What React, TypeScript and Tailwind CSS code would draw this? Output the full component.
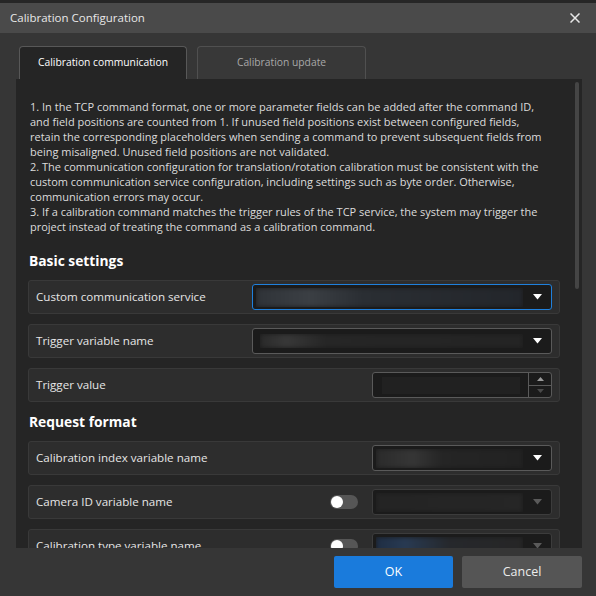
import React from "react";

const font = { fontFamily: '"Open Sans", "Noto Sans", sans-serif' };

function Caret({ dim }: { dim?: boolean }) {
  return (
    <svg width="9" height="6" viewBox="0 0 9 6">
      <path d="M0 0h9L4.5 5.5z" fill={dim ? "#5a5a5a" : "#ffffff"} />
    </svg>
  );
}

function Combo({
  wide,
  focused,
  disabled,
  fill,
}: {
  wide?: boolean;
  focused?: boolean;
  disabled?: boolean;
  fill: string;
}) {
  return (
    <div
      className={`flex h-[26px] items-center rounded-[3px] border bg-[#1b1b1b] ${
        wide ? "w-[300px]" : "w-[180px]"
      } ${focused ? "border-[#1f80dc]" : disabled ? "border-[#3c3c3c]" : "border-[#5a5a5a]"}`}
    >
      <div className="ml-[3px] h-[19px] flex-1 overflow-hidden">
        <div className="h-full w-full blur-[2px]" style={{ background: fill }} />
      </div>
      <div className="flex w-[28px] items-center justify-center">
        <Caret dim={disabled} />
      </div>
    </div>
  );
}

function Spin() {
  return (
    <div className="flex h-[26px] w-[180px] rounded-[3px] border border-[#5a5a5a] bg-[#1b1b1b]">
      <div className="flex flex-1 items-center pl-[9px] pr-[8px]">
        <div className="h-[17px] w-full bg-[#212121]" />
      </div>
      <div className="flex w-[23px] flex-col border-l border-[#5a5a5a]">
        <div className="flex flex-1 items-center justify-center border-b border-[#5a5a5a]">
          <svg width="7" height="4" viewBox="0 0 7 4">
            <path d="M0 4h7L3.5 0z" fill="#9a9a9a" />
          </svg>
        </div>
        <div className="flex flex-1 items-center justify-center">
          <svg width="7" height="4" viewBox="0 0 7 4">
            <path d="M0 0h7L3.5 4z" fill="#4a4a4a" />
          </svg>
        </div>
      </div>
    </div>
  );
}

function Toggle() {
  return (
    <div className="mr-[14px] flex h-[14px] w-[28px] items-center rounded-full bg-[#565656] px-[1px]">
      <div className="h-[12px] w-[12px] rounded-full bg-white" />
    </div>
  );
}

function Row({
  label,
  children,
  toggle,
}: {
  label: string;
  children: React.ReactNode;
  toggle?: boolean;
}) {
  return (
    <div className="flex h-[34px] w-[532px] shrink-0 items-center rounded-[3px] border border-[#393939] bg-[#2d2d2d] pl-[7px] pr-[7px]">
      <span className="flex-1 whitespace-nowrap text-[11.6px] text-[#e6e6e6]">{label}</span>
      {toggle && <Toggle />}
      {children}
    </div>
  );
}

const noteLines = [
  "1. In the TCP command format, one or more parameter fields can be added after the command ID,",
  "and field positions are counted from 1. If unused field positions exist between configured fields,",
  "retain the corresponding placeholders when sending a command to prevent subsequent fields from",
  "being misaligned. Unused field positions are not validated.",
  "2. The communication configuration for translation/rotation calibration must be consistent with the",
  "custom communication service configuration, including settings such as byte order. Otherwise,",
  "communication errors may occur.",
  "3. If a calibration command matches the trigger rules of the TCP service, the system may trigger the",
  "project instead of treating the command as a calibration command.",
];

export default function App() {
  return (
    <div className="flex h-[596px] w-[596px] flex-col overflow-hidden bg-[#363636]" style={font}>
      <div className="h-[3px] shrink-0 bg-[#262626]" />
      {/* title bar */}
      <div className="flex h-[30px] shrink-0 items-center justify-between bg-[#4a4a4a] pl-[10px] pr-[16px]">
        <span className="text-[11.5px] text-[#e8e8e8]">Calibration Configuration</span>
        <svg width="10" height="10" viewBox="0 0 10 10">
          <path d="M0.5 0.5l9 9M9.5 0.5l-9 9" stroke="#e8e8e8" strokeWidth="1.5" />
        </svg>
      </div>

      {/* tabs */}
      <div className="mt-[13px] flex shrink-0 pl-[19px]">
        <div className="flex h-[33px] w-[168px] items-center justify-center rounded-t-[4px] border border-b-0 border-[#585858] bg-[#252525] text-[10.3px] text-white">
          Calibration communication
        </div>
        <div className="ml-[10px] flex h-[33px] w-[169px] items-center justify-center rounded-t-[4px] border border-b-0 border-[#505050] bg-[#383838] text-[10.3px] text-[#a8a8a8]">
          Calibration update
        </div>
      </div>

      {/* content panel */}
      <div className="relative ml-[16px] h-[469px] w-[566px] shrink-0 overflow-hidden bg-[#252525]">
        <div className="absolute right-[3px] top-[3px] h-[207px] w-[4px] rounded-full bg-[#454545]" />
        <div className="pl-[12px] pt-[20px]">
          <div className="pl-[2px] text-[11px] leading-[15px] text-[#dcdcdc]">
            {noteLines.map((n) => (
              <div key={n} className="whitespace-nowrap">
                {n}
              </div>
            ))}
          </div>
          <h3 className="mt-[18px] pl-[1px] text-[13.8px] font-bold leading-[18px] text-white">Basic settings</h3>
          <div className="mt-[10px] flex flex-col gap-[10px]">
            <Row label="Custom communication service">
              <Combo
                wide
                focused
                fill="linear-gradient(90deg,#2f3338 0%,#3b3f44 20%,#2a2e33 40%,#23262b 100%)"
              />
            </Row>
            <Row label="Trigger variable name">
              <div className="flex h-[26px] w-[300px] items-center rounded-[3px] border border-[#5a5a5a] bg-[#1b1b1b]">
                <div className="ml-[7px] h-[14px] flex-1 overflow-hidden">
                  <div
                    className="h-full w-full blur-[2px]"
                    style={{ background: "linear-gradient(90deg,#2a2a2a 0%,#383838 10%,#262626 25%,#242424 100%)" }}
                  />
                </div>
                <div className="flex w-[28px] items-center justify-center">
                  <Caret />
                </div>
              </div>
            </Row>
            <Row label="Trigger value">
              <Spin />
            </Row>
          </div>
          <h3 className="mt-[11px] pl-[1px] text-[13.8px] font-bold leading-[18px] text-white">Request format</h3>
          <div className="mt-[10px] flex flex-col gap-[10px]">
            <Row label="Calibration index variable name">
              <Combo fill="linear-gradient(90deg,#2b2b2b 0%,#363636 25%,#252525 45%,#222222 100%)" />
            </Row>
            <Row label="Camera ID variable name" toggle>
              <Combo disabled fill="linear-gradient(90deg,#242424 0%,#262626 100%)" />
            </Row>
            <Row label="Calibration type variable name" toggle>
              <Combo disabled fill="linear-gradient(90deg,#1f2e44 0%,#283a52 20%,#26282c 50%,#262626 100%)" />
            </Row>
          </div>
        </div>
      </div>

      {/* footer */}
      <div className="flex flex-1 items-start justify-end gap-[9px] pr-[14px] pt-[8px]">
        <button className="h-[32px] w-[119px] rounded-[2px] bg-[#1a7bdc] text-[12.5px] text-white">OK</button>
        <button className="h-[32px] w-[120px] rounded-[2px] bg-[#555555] text-[12.5px] text-[#ececec]">Cancel</button>
      </div>
    </div>
  );
}
